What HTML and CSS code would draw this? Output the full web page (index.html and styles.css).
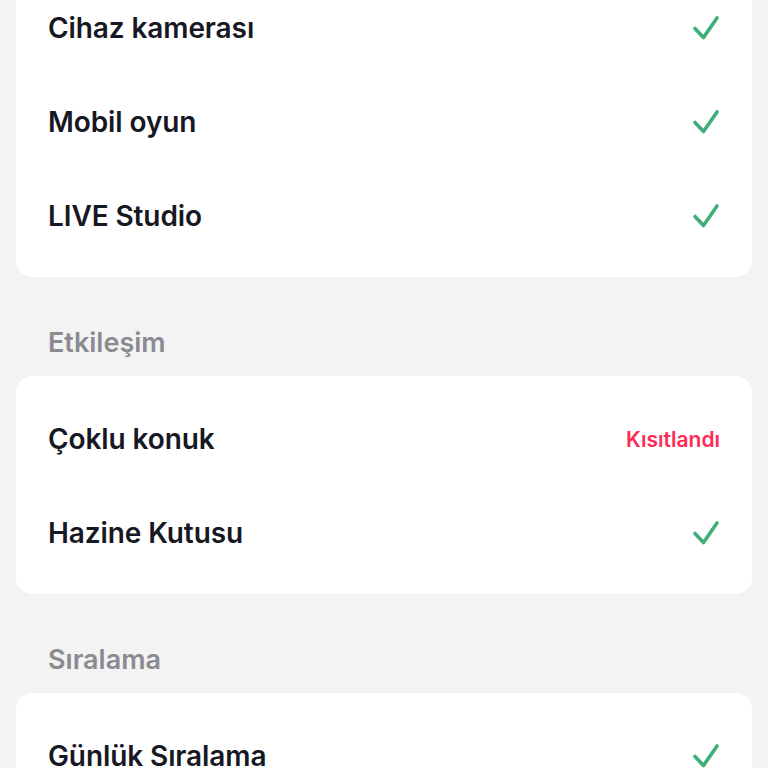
FILE: index.html
```html
<!DOCTYPE html>
<html lang="tr">
  <head>
    <meta charset="UTF-8" />
    <meta name="viewport" content="width=device-width, initial-scale=1.0" />
    <title>LIVE ayarları</title>
    <link rel="stylesheet" href="styles.css">
  </head>
  <body>
    <div class="page">
      <div class="card">
        <div class="row">
          <span class="label">Cihaz kamerası</span>
          <svg class="check" viewBox="0 0 28 28"><path d="M3 14.5 L11.5 23.5 L25 4"/></svg>
        </div>
        <div class="row">
          <span class="label">Mobil oyun</span>
          <svg class="check" viewBox="0 0 28 28"><path d="M3 14.5 L11.5 23.5 L25 4"/></svg>
        </div>
        <div class="row">
          <span class="label">LIVE Studio</span>
          <svg class="check" viewBox="0 0 28 28"><path d="M3 14.5 L11.5 23.5 L25 4"/></svg>
        </div>
      </div>

      <h2 class="section-title">Etkileşim</h2>
      <div class="card">
        <div class="row">
          <span class="label">Çoklu konuk</span>
          <span class="status-restricted">Kısıtlandı</span>
        </div>
        <div class="row">
          <span class="label">Hazine Kutusu</span>
          <svg class="check" viewBox="0 0 28 28"><path d="M3 14.5 L11.5 23.5 L25 4"/></svg>
        </div>
      </div>

      <h2 class="section-title">Sıralama</h2>
      <div class="card">
        <div class="row">
          <span class="label">Günlük Sıralama</span>
          <svg class="check" viewBox="0 0 28 28"><path d="M3 14.5 L11.5 23.5 L25 4"/></svg>
        </div>
      </div>
    </div>
  </body>
</html>
```

FILE: styles.css
```css
html,
body {
  margin: 0;
  padding: 0;
  height: 100%;
  overflow: hidden;
}

body {
  font-family: 'Inter', 'Noto Sans', Arial, sans-serif;
  background-color: #f3f3f3;
  color: #161823;
}

.page {
  margin-top: -35px;
  padding: 0 16px;
}

.card {
  background-color: #fff;
  border-radius: 16px;
  padding: 16px 0 14px;
}

.row {
  height: 94px;
  display: flex;
  align-items: center;
  justify-content: space-between;
  padding: 0 32px;
}

.label {
  font-size: 28px;
  font-weight: 600;
  letter-spacing: -0.1px;
}

.check {
  width: 28px;
  height: 28px;
  fill: none;
  stroke: #3fae78;
  stroke-width: 3.6;
  stroke-linecap: round;
  stroke-linejoin: round;
}

.status-restricted {
  font-size: 21px;
  font-weight: 600;
  color: #fe2c55;
}

.section-title {
  margin: 0;
  height: 99px;
  box-sizing: border-box;
  padding: 49px 32px 0;
  font-size: 27px;
  font-weight: 600;
  color: #8a8b91;
  line-height: 34px;
}
```
